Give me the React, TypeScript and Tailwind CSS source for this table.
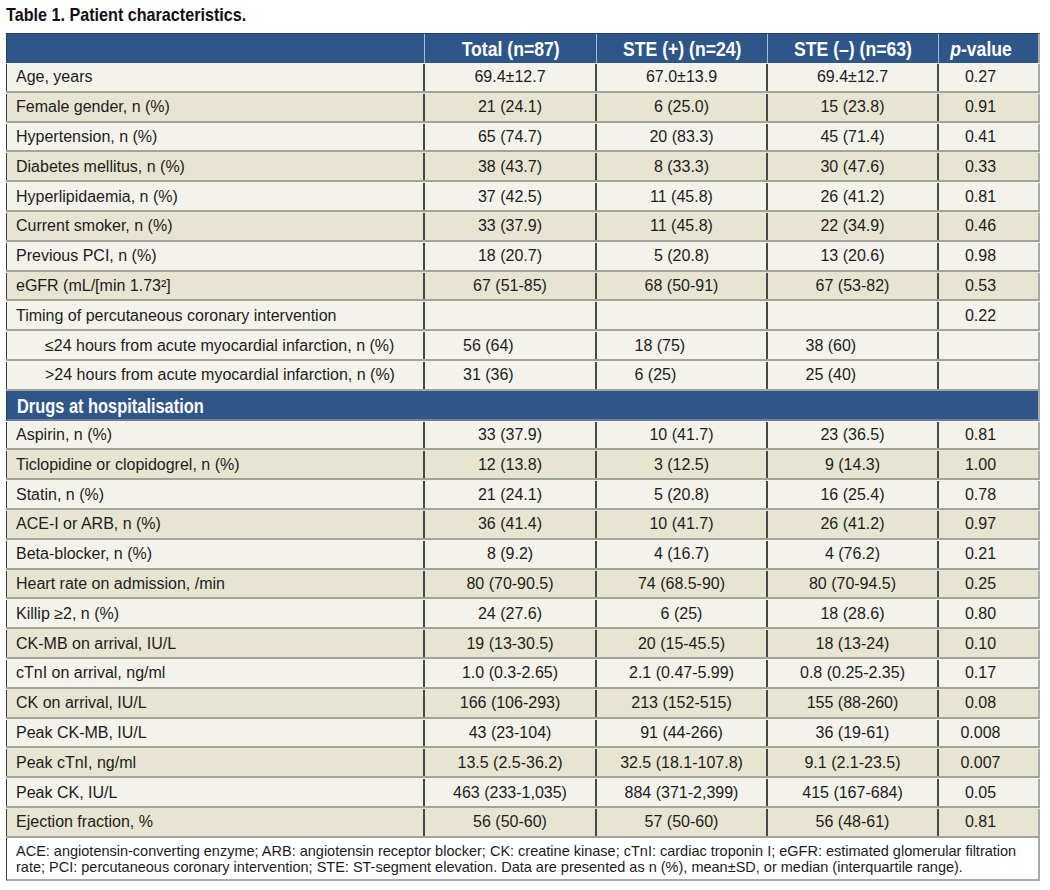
import React from 'react';

type Row = {
  label: string;
  v: [string, string, string, string];
  dark?: boolean;
  indent?: boolean;
};

const rowsA: Row[] = [
  { label: 'Age, years', v: ['69.4±12.7', '67.0±13.9', '69.4±12.7', '0.27'] },
  { label: 'Female gender, n (%)', v: ['21 (24.1)', '6 (25.0)', '15 (23.8)', '0.91'], dark: true },
  { label: 'Hypertension, n (%)', v: ['65 (74.7)', '20 (83.3)', '45 (71.4)', '0.41'] },
  { label: 'Diabetes mellitus, n (%)', v: ['38 (43.7)', '8 (33.3)', '30 (47.6)', '0.33'], dark: true },
  { label: 'Hyperlipidaemia, n (%)', v: ['37 (42.5)', '11 (45.8)', '26 (41.2)', '0.81'] },
  { label: 'Current smoker, n (%)', v: ['33 (37.9)', '11 (45.8)', '22 (34.9)', '0.46'], dark: true },
  { label: 'Previous PCI, n (%)', v: ['18 (20.7)', '5 (20.8)', '13 (20.6)', '0.98'] },
  { label: 'eGFR (mL/[min 1.73²]', v: ['67 (51-85)', '68 (50-91)', '67 (53-82)', '0.53'], dark: true },
  { label: 'Timing of percutaneous coronary intervention', v: ['', '', '', '0.22'] },
  { label: '≤24 hours from acute myocardial infarction, n (%)', v: ['56 (64)', '18 (75)', '38 (60)', ''], indent: true },
  { label: '>24 hours from acute myocardial infarction, n (%)', v: ['31 (36)', '6 (25)', '25 (40)', ''], indent: true },
];

const rowsB: Row[] = [
  { label: 'Aspirin, n (%)', v: ['33 (37.9)', '10 (41.7)', '23 (36.5)', '0.81'] },
  { label: 'Ticlopidine or clopidogrel, n (%)', v: ['12 (13.8)', '3 (12.5)', '9 (14.3)', '1.00'], dark: true },
  { label: 'Statin, n (%)', v: ['21 (24.1)', '5 (20.8)', '16 (25.4)', '0.78'] },
  { label: 'ACE-I or ARB, n (%)', v: ['36 (41.4)', '10 (41.7)', '26 (41.2)', '0.97'], dark: true },
  { label: 'Beta-blocker, n (%)', v: ['8 (9.2)', '4 (16.7)', '4 (76.2)', '0.21'] },
  { label: 'Heart rate on admission, /min', v: ['80 (70-90.5)', '74 (68.5-90)', '80 (70-94.5)', '0.25'], dark: true },
  { label: 'Killip ≥2, n (%)', v: ['24 (27.6)', '6 (25)', '18 (28.6)', '0.80'] },
  { label: 'CK-MB on arrival, IU/L', v: ['19 (13-30.5)', '20 (15-45.5)', '18 (13-24)', '0.10'], dark: true },
  { label: 'cTnI on arrival, ng/ml', v: ['1.0 (0.3-2.65)', '2.1 (0.47-5.99)', '0.8 (0.25-2.35)', '0.17'] },
  { label: 'CK on arrival, IU/L', v: ['166 (106-293)', '213 (152-515)', '155 (88-260)', '0.08'], dark: true },
  { label: 'Peak CK-MB, IU/L', v: ['43 (23-104)', '91 (44-266)', '36 (19-61)', '0.008'] },
  { label: 'Peak cTnI, ng/ml', v: ['13.5 (2.5-36.2)', '32.5 (18.1-107.8)', '9.1 (2.1-23.5)', '0.007'], dark: true },
  { label: 'Peak CK, IU/L', v: ['463 (233-1,035)', '884 (371-2,399)', '415 (167-684)', '0.05'] },
  { label: 'Ejection fraction, %', v: ['56 (50-60)', '57 (50-60)', '56 (48-61)', '0.81'], dark: true },
];

const body = { fontFamily: '"Liberation Sans", Arial, sans-serif' };

const colW = ['w-[419px]', 'w-[172px]', 'w-[171px]', 'w-[171px]', 'w-[101px]'];

function DataRow({ row }: { row: Row }) {
  const bg = row.dark ? 'bg-[#e7e5d1]' : 'bg-[#f4f3eb]';
  return (
    <div className={`flex h-[29.8px] pt-[1px] border-b-2 border-[#a4a398] ${bg} text-[16px] text-[#1c1c1c]`}>
      <div
        className={`${colW[0]} flex items-center border-l border-r-2 border-l-[#3a3a3a] border-r-[#484848] ${
          row.indent ? 'pl-[38px]' : 'pl-[9px]'
        }`}
      >
        {row.label}
      </div>
      {row.v.slice(0, 3).map((val, i) => (
        <div
          key={i}
          className={`${colW[i + 1]} flex items-center justify-center border-r-2 border-[#484848]`}
        >
          {row.indent ? <span className="inline-block w-[94px] text-left">{val}</span> : val}
        </div>
      ))}
      <div className={`${colW[4]} flex items-center justify-center pr-[16px] border-r-2 border-[#a9a9a9]`}>
        {row.v[3]}
      </div>
    </div>
  );
}

function Head({ children }: { children: React.ReactNode }) {
  return <span className="inline-block scale-x-[0.88] whitespace-nowrap">{children}</span>;
}

export default function App() {
  return (
    <div className="bg-white w-[1050px] h-[890px] pl-[6px]" style={body}>
      <div className="h-[33px] flex items-center pb-[2px]">
        <span className="inline-block origin-left scale-x-[0.85] whitespace-nowrap text-[19px] font-bold text-[#111]">
          Table 1. Patient characteristics.
        </span>
      </div>
      <div className="w-[1034px]">
        <div className="flex h-[30px] bg-[#2e5689] text-white text-[20px] font-bold border-t border-l border-[#1f3d66] border-r-2 border-r-[#a9a9a9]">
          <div className="w-[418px] border-r border-[#a9bdd6]" />
          <div className="w-[172px] flex items-center justify-center border-r border-[#a9bdd6]">
            <Head>Total (n=87)</Head>
          </div>
          <div className="w-[171px] flex items-center justify-center border-r border-[#a9bdd6]">
            <Head>STE (+) (n=24)</Head>
          </div>
          <div className="w-[171px] flex items-center justify-center border-r border-[#a9bdd6]">
            <Head>STE (–) (n=63)</Head>
          </div>
          <div className="flex-1 flex items-center justify-center pr-[14px]">
            <Head>
              <i>p</i>-value
            </Head>
          </div>
        </div>
        {rowsA.map((r) => (
          <DataRow key={r.label} row={r} />
        ))}
        <div className="flex items-center h-[29.8px] pt-[2px] bg-[#2e5689] text-white text-[20px] font-bold pl-[10px] border-l border-[#1f3d66] border-r-2 border-r-[#a9a9a9] border-b-2 border-b-[#6f7f95]">
          <span className="inline-block origin-left scale-x-[0.82] whitespace-nowrap">Drugs at hospitalisation</span>
        </div>
        {rowsB.map((r) => (
          <DataRow key={r.label} row={r} />
        ))}
        <div className="h-[43px] bg-white border-l border-[#3a3a3a] border-r-2 border-r-[#a9a9a9] border-b-2 border-b-[#a9a9a9] px-[9px] pt-[5px] text-[14.5px] leading-[16px] text-[#1c1c1c]">
          ACE: angiotensin-converting enzyme; ARB: angiotensin receptor blocker; CK: creatine kinase; cTnI: cardiac troponin I; eGFR: estimated glomerular filtration rate; PCI: percutaneous coronary intervention; STE: ST-segment elevation. Data are presented as n (%), mean±SD, or median (interquartile range).
        </div>
      </div>
    </div>
  );
}
